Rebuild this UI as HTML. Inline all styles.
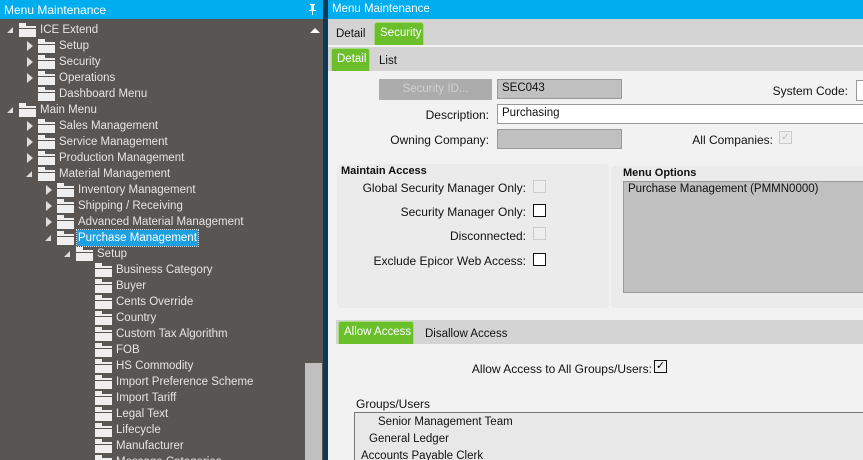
<!DOCTYPE html>
<html><head><style>
*{margin:0;padding:0;box-sizing:border-box}
html,body{width:863px;height:460px;overflow:hidden}
body{font-family:"Liberation Sans",sans-serif;font-size:11.5px;position:relative;background:#f2f2f3}
.a{position:absolute;white-space:nowrap}
#left{position:absolute;left:0;top:0;width:323px;height:460px;background:#595553}
.tb{position:absolute;top:0;height:19px;background:#00adef;color:#fff;font-size:12px;padding:3px 4px}
.row{position:absolute;height:16px;color:#e4e4e4;font-size:11.5px;line-height:16px}
.fold{position:absolute;top:2px;width:17px;height:13px;background:#eee;border-top:2px solid #595553}
.fold:before{content:"";position:absolute;left:0;top:-3px;width:7px;height:3px;background:#eee}
.fold:after{content:"";position:absolute;left:0;top:2px;width:17px;height:1px;background:#595553}
.ex{position:absolute;top:5px;width:0;height:0;border-left:6px solid transparent;border-bottom:6px solid #ddd}
.col{position:absolute;top:3px;width:0;height:0;border-top:5px solid transparent;border-bottom:5px solid transparent;border-left:6px solid #ddd}
.lab{color:#111;font-size:12px;text-align:right}
.cb{position:absolute;width:13px;height:13px;border:1px solid #111;background:#fff}
.cbd{position:absolute;width:13px;height:13px;border:1px solid #ccc;background:#eee}
</style></head><body>
<div id="left">
<div class="tb" style="left:0;width:323px">Menu Maintenance
<svg style="position:absolute;right:6px;top:4px" width="9" height="11" viewBox="0 0 9 11"><path d="M2 0h5v1H6v5h2v1H1V6h2V1H2z M4 7h1v4H4z" fill="#fff"/></svg></div>
<div class="a" style="left:310px;top:28px;width:0;height:0;border-left:5px solid transparent;border-right:5px solid transparent;border-bottom:5px solid #fff"></div>
<div class="a" style="left:305px;top:363px;width:17px;height:97px;background:#c0c0c0"></div>
<div id="tree" style="position:absolute;left:0;top:1px;width:305px;height:459px;overflow:hidden"></div>
</div>
<div class="a" style="left:323px;top:0;width:5px;height:460px;background:#0d3a56"></div>
<script>
var items=[[0,'e','ICE Extend'],[1,'c','Setup'],[1,'c','Security'],[1,'c','Operations'],[1,'','Dashboard Menu'],[0,'e','Main Menu'],[1,'c','Sales Management'],[1,'c','Service Management'],[1,'c','Production Management'],[1,'e','Material Management'],[2,'c','Inventory Management'],[2,'c','Shipping / Receiving'],[2,'c','Advanced Material Management'],[2,'e','Purchase Management',1],[3,'e','Setup'],[4,'','Business Category'],[4,'','Buyer'],[4,'','Cents Override'],[4,'','Country'],[4,'','Custom Tax Algorithm'],[4,'','FOB'],[4,'','HS Commodity'],[4,'','Import Preference Scheme'],[4,'','Import Tariff'],[4,'','Legal Text'],[4,'','Lifecycle'],[4,'','Manufacturer'],[4,'','Message Categories']];
var h='';items.forEach(function(it,i){var t=22+16*i-1,x=19*it[0];h+='<div class="row" style="top:'+t+'px;left:0;width:305px">';
if(it[1]=='e')h+='<div class="ex" style="left:'+(x+7)+'px"></div>';if(it[1]=='c')h+='<div class="col" style="left:'+(x+8)+'px"></div>';
h+='<div class="fold" style="left:'+(x+19)+'px"></div>';
h+='<span style="position:absolute;left:'+(x+40)+'px;'+(it[3]?'background:#1e9fe0;color:#fff;outline:1px dotted #ddd;padding:0 1px;left:'+(x+39)+'px':'')+'">'+it[2]+'</span></div>';});
document.getElementById('tree').innerHTML=h;
</script>
<div class="tb" style="left:328px;width:535px;font-size:11.5px">Menu Maintenance</div>
<div class="a" style="left:328px;top:19px;width:535px;height:26px;background:#d4d4d4"></div>
<div class="a" style="left:336px;top:28px;color:#111">Detail</div>
<div class="a" style="left:374px;top:22px;width:50px;height:23px;background:#6abf2a;border:1px solid #a6dc80;border-bottom:none;border-radius:3px 3px 0 0;color:#fff;padding:4px 0 0 5px">Security</div>
<div class="a" style="left:328px;top:47px;width:535px;height:24px;background:#d4d4d4"></div>
<div class="a" style="left:331px;top:48px;width:39px;height:23px;background:#6abf2a;border:1px solid #a6dc80;border-bottom:none;border-radius:3px 3px 0 0;color:#fff;padding:4px 0 0 5px">Detail</div>
<div class="a" style="left:379px;top:55px;color:#111">List</div>
<div class="a" style="left:379px;top:79px;width:113px;height:21px;background:#acacac;color:#d0d0d0;text-align:center;padding-top:4px">Security ID...</div>
<div class="a" style="left:497px;top:79px;width:125px;height:20px;background:#c0c0c0;border:1px solid #999;padding:2px 4px;color:#111">SEC043</div>
<div class="a lab" style="left:700px;top:84px;width:148px">System Code:</div>
<div class="a" style="left:856px;top:80px;width:10px;height:21px;background:#fff;border:1px solid #999"></div>
<div class="a lab" style="left:340px;top:108px;width:149px">Description:</div>
<div class="a" style="left:497px;top:104px;width:370px;height:20px;background:#fff;border:1px solid #999;padding:2px 4px;color:#111">Purchasing</div>
<div class="a lab" style="left:340px;top:133px;width:149px">Owning Company:</div>
<div class="a" style="left:497px;top:129px;width:125px;height:20px;background:#c0c0c0;border:1px solid #999"></div>
<div class="a lab" style="left:650px;top:133px;width:123px">All Companies:</div>
<div class="cbd" style="left:779px;top:131px;color:#bbb;font-size:10px;line-height:11px;text-align:center">&#10003;</div>
<div class="a" style="left:337px;top:164px;width:272px;height:144px;background:#ebebeb;border-radius:4px"></div>
<div class="a" style="left:341px;top:165px;font-weight:bold;font-size:11px;color:#111">Maintain Access</div>
<div class="a lab" style="left:340px;top:181px;width:186px">Global Security Manager Only:</div>
<div class="cbd" style="left:533px;top:180px"></div>
<div class="a lab" style="left:340px;top:205px;width:186px">Security Manager Only:</div>
<div class="cb" style="left:533px;top:204px"></div>
<div class="a lab" style="left:340px;top:229px;width:186px">Disconnected:</div>
<div class="cbd" style="left:533px;top:227px"></div>
<div class="a lab" style="left:340px;top:254px;width:186px">Exclude Epicor Web Access:</div>
<div class="cb" style="left:533px;top:253px"></div>
<div class="a" style="left:611px;top:166px;width:260px;height:142px;background:#ebebeb;border-radius:4px"></div>
<div class="a" style="left:623px;top:167px;font-weight:bold;font-size:11px;color:#111">Menu Options</div>
<div class="a" style="left:623px;top:181px;width:245px;height:112px;background:#c0c0c0;border:1px solid #999;padding:1px 4px;color:#111">Purchase Management (PMMN0000)</div>
<div class="a" style="left:336px;top:320px;width:527px;height:24px;background:#d4d4d4"></div>
<div class="a" style="left:338px;top:321px;width:76px;height:23px;background:#6abf2a;border:1px solid #a6dc80;border-bottom:none;border-radius:3px 3px 0 0;color:#fff;padding:4px 0 0 5px">Allow Access</div>
<div class="a" style="left:425px;top:328px;color:#111">Disallow Access</div>
<div class="a lab" style="left:400px;top:362px;width:252px">Allow Access to All Groups/Users:</div>
<div class="cb" style="left:654px;top:360px;background:#f2f2f3;font-size:11px;line-height:11px;text-align:center">&#10003;</div>
<div class="a" style="left:356px;top:397px;color:#111;font-size:12px">Groups/Users</div>
<div class="a" style="left:354px;top:412px;width:520px;height:48px;background:#e8e8e8;border:1px solid #777;border-bottom:none"></div>
<div class="a" style="left:378px;top:416px;color:#111">Senior Management Team</div>
<div class="a" style="left:369px;top:433px;color:#111">General Ledger</div>
<div class="a" style="left:361px;top:450px;color:#111">Accounts Payable Clerk</div>
</body></html>
